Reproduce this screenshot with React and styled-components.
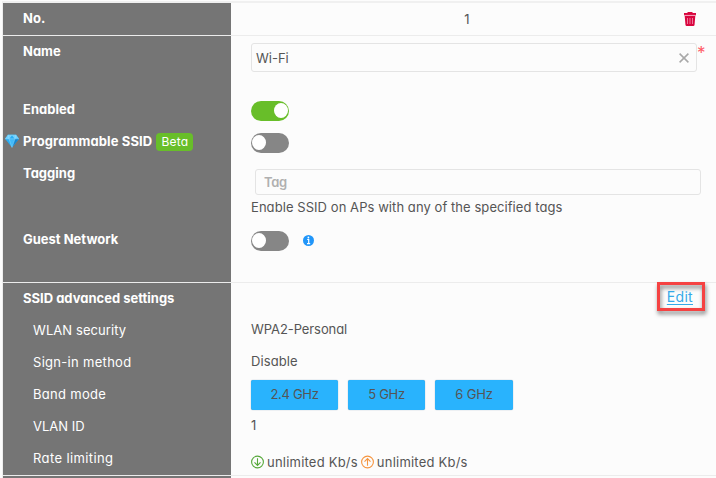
import React from "react";
import styled, { createGlobalStyle, css } from "styled-components";

const GlobalStyle = createGlobalStyle`
  * { box-sizing: border-box; }
  body {
    margin: 0;
    background: #fcfcfc;
    color: #555;
    font: 13px/32px Inter, "Liberation Sans", sans-serif;
    font-feature-settings: "cv11";
    overflow: hidden;
  }
`;

const Page = styled.main`
  width: 716px;
  height: 478px;
  padding-top: 1px;
  padding-left: 2px;
  overflow: hidden;
`;

const Table = styled.div`
  border-top: 2px solid #f0f0f0;
  border-left: 1px solid #ededed;
`;

const Section = styled.section`
  display: grid;
  grid-template-columns: 228px 1fr;
  grid-template-rows: ${(p) => p.$rows};
  position: relative;
  border-bottom: 1px solid #ececec;
  height: ${(p) => p.$height}px;
`;

const Label = styled.div`
  display: flex;
  align-items: flex-start;
  background: #757575;
  color: #fff;
  padding-left: ${(p) => (p.$sub ? 30 : 20)}px;
  font-weight: ${(p) => (p.$sub ? 400 : 700)};
  white-space: nowrap;
`;

const Text = styled.span`
  display: block;
  white-space: nowrap;
  letter-spacing: ${(p) => p.$ls || 0}px;
  ${(p) => p.$up && css`margin-top: -${p.$up}px;`}
`;

const Value = styled.div`
  display: flex;
  align-items: flex-start;
  padding-left: 20px;
  white-space: nowrap;
`;

const Stack = styled(Value)`
  flex-direction: column;
`;

const Header = styled.div`
  display: grid;
  grid-template-columns: 1fr 13px;
  align-items: center;
  padding-right: 19px;
  text-align: center;
  padding-left: 19px;
`;

const Beta = styled.span`
  margin: 8px 0 0 4px;
  width: 37px;
  height: 18px;
  border-radius: 4px;
  background: #68be29;
  font-size: 12px;
  font-weight: 400;
  line-height: 18px;
  text-align: center;
  letter-spacing: 0.2px;
`;

const GemSlot = styled.span`
  display: flex;
  width: 14px;
  height: 32px;
  align-items: center;
  margin: 0 4px 0 -18px;
`;

const Input = styled.div`
  display: flex;
  align-items: center;
  justify-content: space-between;
  width: 446px;
  height: ${(p) => p.$height}px;
  margin: ${(p) => p.$margin};
  padding: ${(p) => p.$padding};
  border: 1px solid #e4e4e4;
  border-radius: 3px;
  line-height: 20px;
  color: ${(p) => (p.$muted ? "#b0b0b0" : "#555")};
  font-weight: ${(p) => (p.$muted ? 600 : 400)};
`;

const Required = styled.span`
  margin: 7px 0 0 0;
  color: #ff5a66;
  font-size: 17px;
  line-height: 20px;
  height: 14px;
`;

const Toggle = styled.span`
  display: flex;
  align-items: center;
  justify-content: ${(p) => (p.$on ? "flex-end" : "flex-start")};
  width: 38px;
  height: 20px;
  margin-top: 8px;
  padding: 0 1px 1px;
  border-radius: 10px;
  background: ${(p) => (p.$on ? "#68be29" : "#868686")};
  &::after {
    content: "";
    width: 14px;
    height: 15px;
    border-radius: 50%;
    background: #fff;
  }
`;

const InfoSlot = styled.span`
  display: flex;
  margin: 12px 0 0 14px;
`;

const EditFrame = styled.div`
  position: absolute;
  top: -1px;
  right: 11px;
  width: 48px;
  height: 29px;
  border: 3px solid #f54242;
  filter: drop-shadow(1px 3px 2px rgba(0, 0, 0, 0.5));
`;

const EditLink = styled.a`
  position: absolute;
  top: 0;
  right: 23px;
  color: #35a9e8;
  font-size: 14px;
  line-height: 28px;
  letter-spacing: 0.3px;
  text-decoration: underline;
  text-underline-offset: 2px;
`;

const Bands = styled(Value)`
  gap: 10px;
`;

const Band = styled.span`
  display: flex;
  justify-content: center;
  width: ${(p) => p.$width}px;
  height: 30px;
  margin-top: 1px;
  border-radius: 2px;
  background: #29b3fd;
  box-shadow: 0 0 1px rgba(0, 60, 100, 0.6);
  line-height: 30px;
`;

const Rates = styled(Value)`
  gap: 3px;
  align-items: center;
  padding-top: 6px;
  line-height: 20px;
`;

const Gem = () => (
  <svg width="14" height="14" viewBox="0 0 14 14">
    <path d="M3 .8h8l3 4L7 13.5 0 4.8z" fill="#29aef5" />
    <path d="M3 .8 0 4.8h4L7 .8zM7 .8l3 4h4l-3-4z" fill="#70d2ff" />
    <path d="M4 4.8h6L7 13.5z" fill="#41bafa" />
    <path d="M10 4.8h4L7 13.5z" fill="#1685cf" />
    <path d="m3 .8 1 4 3-4 3 4 1-4M0 4.8h14M4 4.8l3 8.7 3-8.7" fill="none" stroke="#a7e4ff" strokeWidth=".4" />
  </svg>
);

const Trash = () => (
  <svg width="12" height="14" viewBox="0 0 12 14">
    <path d="M4 0h4l1 1h3v2H0V1h3zM.7 4h10.6l-.8 9.2-.9.8H2.4l-.9-.8z" fill="#d9063f" />
    <path d="M0 3.4h12M3.5 6v6M6 6v6M8.5 6v6" stroke="#ef86a5" strokeWidth=".9" />
  </svg>
);

const Clear = () => (
  <svg width="10" height="10" viewBox="0 0 10 10">
    <path d="m.6.6 8.8 8.8m0-8.8L.6 9.4" stroke="#a8a8a8" strokeWidth="1.5" />
  </svg>
);

const Info = () => (
  <svg width="11" height="11" viewBox="0 0 11 11">
    <circle cx="5.5" cy="5.5" r="5.5" fill="#2196f9" />
    <path d="M4.2 4.5h1.5v4M4 8.7h3.2" fill="none" stroke="#fff" strokeWidth="1.2" />
    <circle cx="5.4" cy="2.5" r=".9" fill="#fff" />
  </svg>
);

const Arrow = ({ up }) => (
  <svg width="13" height="14" viewBox="0 0 13 14" fill="none" stroke={up ? "#f59540" : "#56a83a"} strokeWidth="1.1">
    <circle cx="6.5" cy="7" r="5.9" />
    {up ? <path d="M6.5 10.7V3.6M3.5 6.6l3-3 3 3" /> : <path d="M6.5 3.3v7.1M3.5 7.4l3 3 3-3" />}
  </svg>
);

export default function App() {
  return (
    <Page>
      <GlobalStyle />
      <Table>
        <Section $rows="32px" $height={33}>
          <Label><Text $up={1}>No.</Text></Label>
          <Header><Text $up={1}>1</Text><Trash /></Header>
        </Section>
        <Section $rows="57px 32px 32px 66px 59px" $height={247}>
          <Label><Text $up={1}>Name</Text></Label>
          <Value>
            <Input $height={29} $margin="7px 0 0" $padding="0 7px 0 4px">
              <Text>Wi-Fi</Text><Clear />
            </Input>
            <Required>*</Required>
          </Value>
          <Label><Text>Enabled</Text></Label>
          <Value><Toggle $on /></Value>
          <Label>
            <GemSlot><Gem /></GemSlot>
            <Text $ls={0.12}>Programmable SSID</Text>
            <Beta>Beta</Beta>
          </Label>
          <Value><Toggle /></Value>
          <Label><Text>Tagging</Text></Label>
          <Stack>
            <Input $height={28} $margin="12px 0 0 4px" $padding="0 8px" $muted>
              <Text $ls={-0.3}>Tag</Text>
            </Input>
            <Text $ls={0.065} $up={4}>Enable SSID on APs with any of the specified tags</Text>
          </Stack>
          <Label><Text>Guest Network</Text></Label>
          <Value><Toggle /><InfoSlot><Info /></InfoSlot></Value>
        </Section>
        <Section $rows="repeat(6, 32px)" $height={193}>
          <Label><Text $up={1}>SSID advanced settings</Text></Label>
          <Value />
          <Label $sub><Text $up={1} $ls={0.08}>WLAN security</Text></Label>
          <Value><Text $up={2} $ls={-0.08}>WPA2-Personal</Text></Value>
          <Label $sub><Text $up={1} $ls={0.3}>Sign-in method</Text></Label>
          <Value><Text $up={2} $ls={0.1}>Disable</Text></Value>
          <Label $sub><Text $up={1} $ls={0.3}>Band mode</Text></Label>
          <Bands>
            <Band $width={87}><Text $up={1} $ls={-0.3}>2.4 GHz</Text></Band>
            <Band $width={77}><Text $up={1} $ls={-0.3}>5 GHz</Text></Band>
            <Band $width={78}><Text $up={1} $ls={-0.2}>6 GHz</Text></Band>
          </Bands>
          <Label $sub><Text $up={1}>VLAN ID</Text></Label>
          <Value><Text $up={2}>1</Text></Value>
          <Label $sub><Text $up={1} $ls={0.38}>Rate limiting</Text></Label>
          <Rates>
            <Arrow /><Text $ls={0.22}>unlimited Kb/s</Text>
            <Arrow up /><Text $ls={0.22}>unlimited Kb/s</Text>
          </Rates>
          <EditFrame />
          <EditLink>Edit</EditLink>
        </Section>
        <Section $rows="32px" $height={33}><Label /><Value /></Section>
      </Table>
    </Page>
  );
}
